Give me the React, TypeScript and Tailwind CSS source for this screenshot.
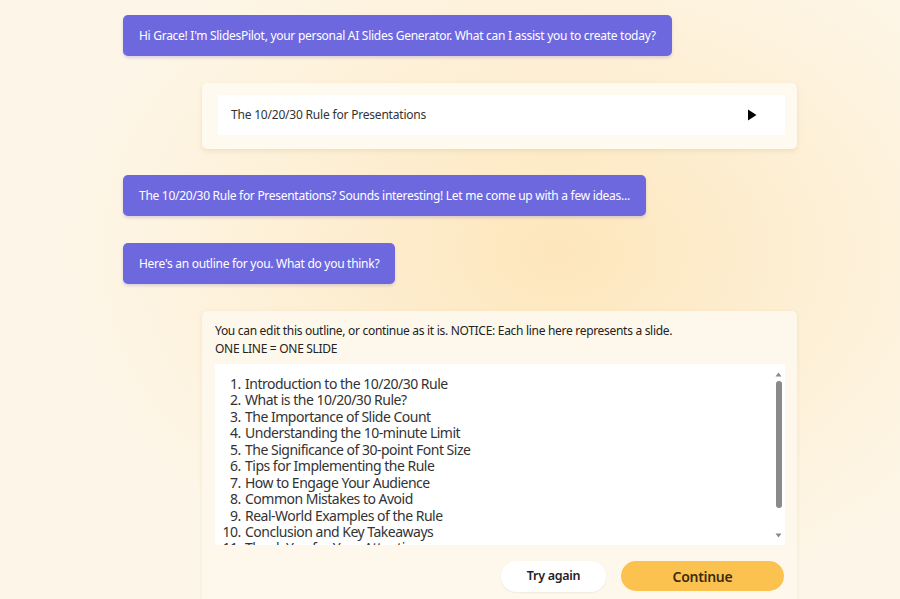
import React from "react";

const outline = [
  "Introduction to the 10/20/30 Rule",
  "What is the 10/20/30 Rule?",
  "The Importance of Slide Count",
  "Understanding the 10-minute Limit",
  "The Significance of 30-point Font Size",
  "Tips for Implementing the Rule",
  "How to Engage Your Audience",
  "Common Mistakes to Avoid",
  "Real-World Examples of the Rule",
  "Conclusion and Key Takeaways",
  "Thank You for Your Attention",
];

function Bubble({ children }: { children: React.ReactNode }) {
  return (
    <div className="flex h-[41px] shrink-0 items-center rounded-[5px] bg-[#6e68df] px-[16px] text-[12px] tracking-[-0.28px] text-white shadow-[0_2px_3px_rgba(120,110,200,0.25)]">
      {children}
    </div>
  );
}

export default function App() {
  return (
    <div
      className="flex h-[599px] w-[900px] flex-col items-start overflow-hidden bg-[radial-gradient(ellipse_55%_60%_at_62%_42%,#fde6bb_0%,#fdefd4_50%,#fdf6e8_100%)] pl-[123px] pt-[15px]"
      style={{ fontFamily: '"Noto Sans", "Open Sans", sans-serif' }}
    >
      <Bubble>Hi Grace! I'm SlidesPilot, your personal AI Slides Generator. What can I assist you to create today?</Bubble>

      <div className="ml-[79px] mt-[27px] w-[595px] shrink-0 rounded-[5px] bg-[#fffaf0] pb-[14px] pl-[16px] pr-[12px] pt-[12px] shadow-[0_2px_4px_rgba(200,170,110,0.25)]">
        <div className="flex h-[40px] items-center justify-between bg-white pl-[13px] pr-[28px]">
          <span className="text-[12px] tracking-[-0.2px] text-[#333]">The 10/20/30 Rule for Presentations</span>
          <svg width="10" height="12" viewBox="0 0 10 12">
            <path d="M1 0.5 L9.5 6 L1 11.5 Z" fill="#000" />
          </svg>
        </div>
      </div>

      <div className="mt-[26px] shrink-0">
        <Bubble>The 10/20/30 Rule for Presentations? Sounds interesting! Let me come up with a few ideas...</Bubble>
      </div>

      <div className="mt-[27px] shrink-0">
        <Bubble>Here's an outline for you. What do you think?</Bubble>
      </div>

      <div className="ml-[79px] mt-[27px] w-[595px] shrink-0 rounded-t-[5px] bg-[#fef8ec] pb-[20px] pl-[13px] pr-[12px] pt-[11px] shadow-[0_1px_4px_rgba(200,170,110,0.2)]">
        <div className="text-[12px] leading-[18px] tracking-[-0.3px] text-[#222]">
          <div>You can edit this outline, or continue as it is. NOTICE: Each line here represents a slide.</div>
          <div>ONE LINE = ONE SLIDE</div>
        </div>

        <div className="relative mt-[6px] h-[181px] overflow-hidden bg-white">
          <ol className="list-decimal pl-[29px] pt-[12px] text-[14px] leading-[16.44px] tracking-[-0.5px] text-[#333]">
            {outline.map((t) => (
              <li key={t} className="pl-[1px]">
                {t}
              </li>
            ))}
          </ol>
          <div className="absolute right-[3px] top-[8px] flex h-[166px] w-[7px] flex-col items-center">
            <svg width="7" height="5" viewBox="0 0 7 5">
              <path d="M3.5 0.5 L6.5 4.5 L0.5 4.5 Z" fill="#8a8a8a" />
            </svg>
            <div className="mt-[4px] h-[127px] w-[6px] rounded-full bg-[#8a8a8a]" />
            <div className="flex-1" />
            <svg width="7" height="5" viewBox="0 0 7 5">
              <path d="M0.5 0.5 L6.5 0.5 L3.5 4.5 Z" fill="#8a8a8a" />
            </svg>
          </div>
        </div>

        <div className="mt-[16px] flex justify-end gap-[15px] pr-[1px]">
          <button className="flex h-[31px] w-[105px] items-center justify-center rounded-full bg-white text-[12.5px] font-semibold tracking-[-0.3px] text-[#222] shadow-[0_1px_2px_rgba(0,0,0,0.06)]">
            Try again
          </button>
          <button className="flex h-[30px] w-[163px] items-center justify-center rounded-full bg-[#fcc24f] text-[14px] font-semibold tracking-[-0.3px] text-[#3b2c10]">
            Continue
          </button>
        </div>
      </div>
    </div>
  );
}
